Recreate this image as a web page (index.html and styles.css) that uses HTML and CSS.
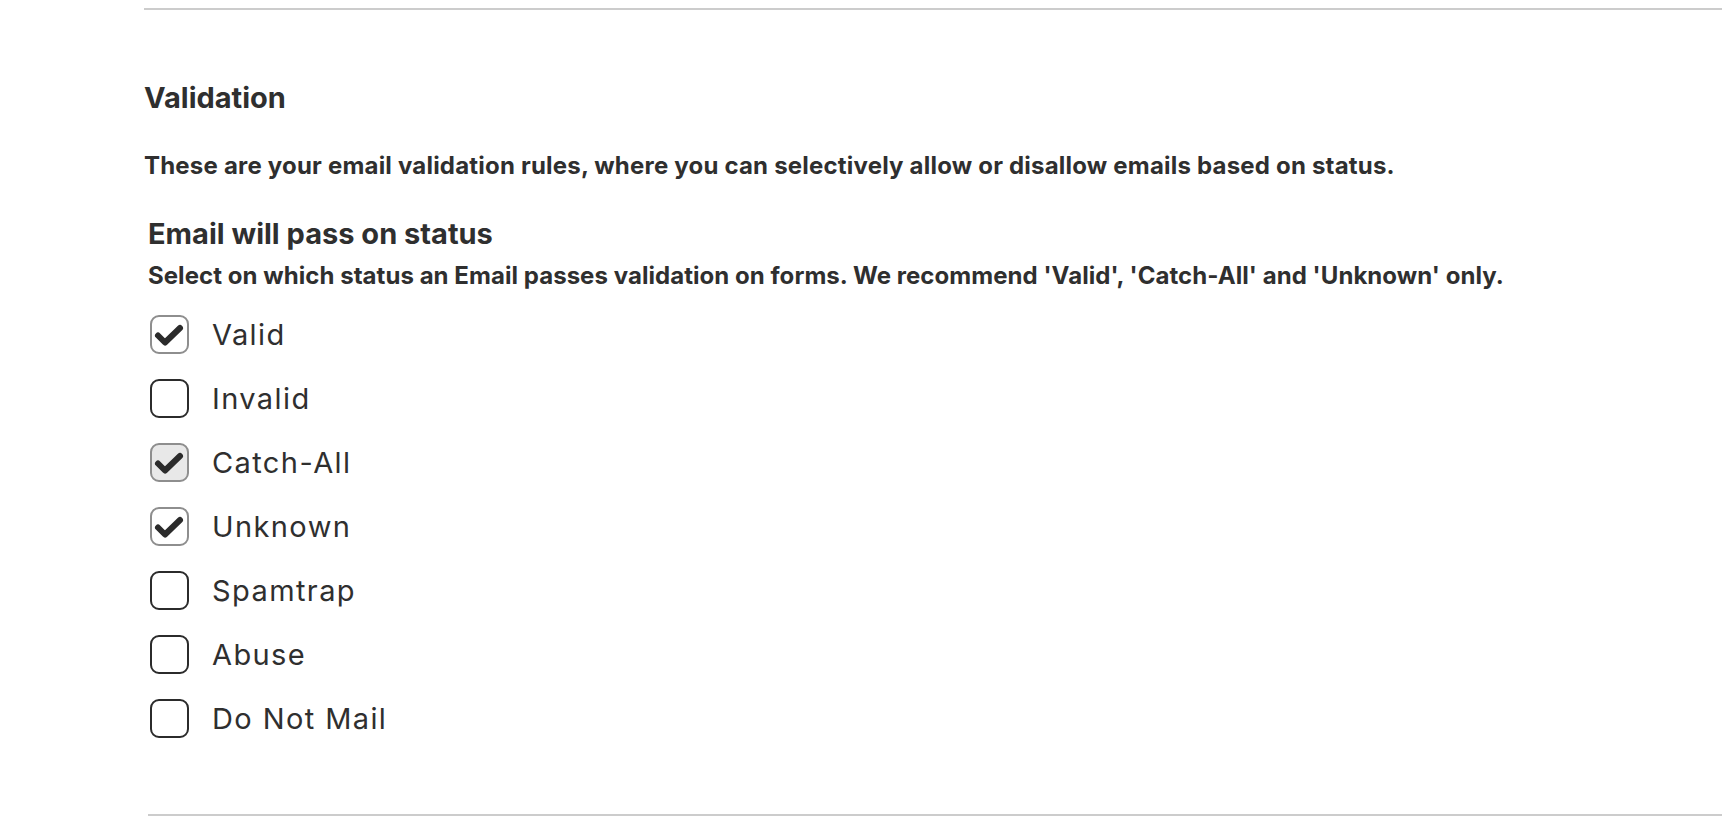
FILE: index.html
```html
<!DOCTYPE html>
<html lang="en">
<head>
<meta charset="utf-8">
<title>Validation</title>
<link rel="stylesheet" href="styles.css">
</head>
<body>
<div class="page">
  <div class="rule"></div>
  <section class="validation">
    <h2 class="title">Validation</h2>
    <p class="desc">These are your email validation rules, where you can selectively allow or disallow emails based on status.</p>
    <div class="group">
      <h3 class="group-title">Email will pass on status</h3>
      <p class="group-desc">Select on which status an Email passes validation on forms. We recommend 'Valid', 'Catch-All' and 'Unknown' only.</p>
      <ul class="options">
        <li class="option">
          <span class="box checked"><svg viewBox="2 2 35 35"><path d="M8 20.5 L15 27.5 L30 13" /></svg></span>
          <span class="label">Valid</span>
        </li>
        <li class="option">
          <span class="box"></span>
          <span class="label">Invalid</span>
        </li>
        <li class="option">
          <span class="box checked shaded"><svg viewBox="2 2 35 35"><path d="M8 20.5 L15 27.5 L30 13" /></svg></span>
          <span class="label">Catch-All</span>
        </li>
        <li class="option">
          <span class="box checked"><svg viewBox="2 2 35 35"><path d="M8 20.5 L15 27.5 L30 13" /></svg></span>
          <span class="label">Unknown</span>
        </li>
        <li class="option">
          <span class="box"></span>
          <span class="label">Spamtrap</span>
        </li>
        <li class="option">
          <span class="box"></span>
          <span class="label">Abuse</span>
        </li>
        <li class="option">
          <span class="box"></span>
          <span class="label">Do Not Mail</span>
        </li>
      </ul>
    </div>
  </section>
  <div class="rule rule-bottom"></div>
</div>
</body>
</html>
```

FILE: styles.css
```css
* { box-sizing: border-box; }
html, body {
  margin: 0;
  padding: 0;
  background: #ffffff;
}
body {
  font-family: Inter, "Noto Sans", "Liberation Sans", sans-serif;
  color: #2f2f2f;
}
.page {
  padding: 8px 0 0 144px;
  height: 828px;
  overflow: hidden;
}
.rule {
  height: 2px;
  background: #cccccc;
}
.rule-bottom {
  margin-left: 4px;
  margin-top: 76px;
}
.validation {
  padding-top: 71px;
}
.title {
  margin: 0;
  font-size: 29px;
  line-height: 34px;
  font-weight: 700;
}
.desc {
  margin: 36px 0 0;
  font-size: 24px;
  line-height: 30px;
  font-weight: 700;
  letter-spacing: 0.2px;
}
.group {
  padding-left: 4px;
  margin-top: 36px;
}
.group-title {
  margin: 0;
  font-size: 29px;
  line-height: 34px;
  font-weight: 700;
}
.group-desc {
  margin: 10px 0 0;
  font-size: 24px;
  line-height: 30px;
  font-weight: 700;
  letter-spacing: 0.05px;
}
.options {
  list-style: none;
  margin: 24px 0 0;
  padding: 0 0 0 2px;
  display: flex;
  flex-direction: column;
  gap: 25px;
}
.option {
  display: flex;
  align-items: center;
  gap: 23px;
  height: 39px;
}
.box {
  width: 39px;
  height: 39px;
  border: 2px solid #2b2b2b;
  border-radius: 9px;
  background: #ffffff;
  display: flex;
  flex: none;
}
.box svg {
  width: 35px;
  height: 35px;
}
.box path {
  fill: none;
  stroke: #2b2b2b;
  stroke-width: 6;
  stroke-linejoin: round;
  stroke-linecap: round;
}
.box.checked {
  border-color: #8e8e8e;
}
.box.shaded {
  background: #e8e8e8;
}
.label {
  font-size: 29px;
  line-height: 39px;
  font-weight: 400;
  letter-spacing: 1.4px;
}
```
